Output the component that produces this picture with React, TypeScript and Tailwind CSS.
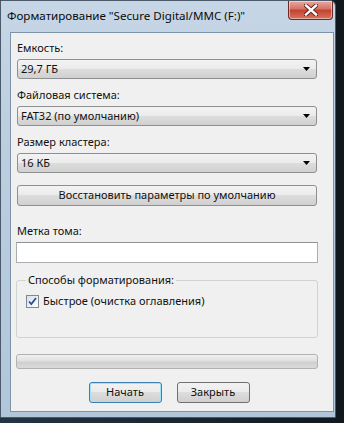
import React from 'react';

const Combo = ({ value }: { value: string }) => (
  <div className="flex h-[20px] items-center justify-between rounded-[3px] border border-[#8e8f8f] bg-[linear-gradient(#f3f3f3,#ebebeb_50%,#dddddd_50%,#d0d0d0)] pl-[3px] pr-[6px]">
    <span>{value}</span>
    <svg width="7" height="4" viewBox="0 0 7 4">
      <path d="M0 0h7L3.5 4z" fill="#000" />
    </svg>
  </div>
);

const Label = ({ children }: { children: React.ReactNode }) => (
  <div className="mb-[3px] h-[16px] leading-[16px]">{children}</div>
);

export default function App() {
  return (
    <div className="h-[423px] w-[344px] overflow-hidden bg-[linear-gradient(90deg,#243444,#10181f)] font-['Noto_Sans',sans-serif] text-[11px] text-[#111]">
      <div className="flex h-[418px] w-[336px] flex-col rounded-tr-[6px] border border-[#4a5a6a] bg-[linear-gradient(180deg,#c6d6e6,#bccfe1_30%,#b2c6da)]">
        {/* title bar */}
        <div className="flex h-[31px] items-start justify-between pl-[6px]">
          <div className="pt-[7px] text-[11.6px] leading-[16px] text-[#0b0b0b]">
            Форматирование "Secure Digital/MMC (F:)"
          </div>
          <div className="mr-[2px] flex h-[19px] w-[45px] items-center justify-center rounded-b-[4px] border border-t-0 border-[#6b2a26] bg-[linear-gradient(#e9a99f,#d27266_45%,#c2402f_50%,#d6745e)] shadow-[inset_0_0_0_1px_rgba(255,255,255,0.45)]">
            <svg width="14" height="12" viewBox="0 0 14 12">
              <path d="M2 1.5l10 9M12 1.5l-10 9" stroke="#5a1c16" strokeWidth="4.2" strokeLinecap="square" />
              <path d="M2 1.5l10 9M12 1.5l-10 9" stroke="#fff" strokeWidth="2.4" strokeLinecap="square" />
            </svg>
          </div>
        </div>
        {/* client area */}
        <div className="ml-[9px] mr-[1px] flex h-[380px] flex-col border border-[#7f93a8] bg-[#f0f0f0] pl-[6px] pr-[16px] pt-[7px]">
          <Label>Емкость:</Label>
          <Combo value="29,7 ГБ" />
          <div className="mt-[8px]">
            <Label>Файловая система:</Label>
            <Combo value="FAT32 (по умолчанию)" />
          </div>
          <div className="mt-[8px]">
            <Label>Размер кластера:</Label>
            <Combo value="16 КБ" />
          </div>
          <div className="mt-[12px] flex h-[21px] items-center justify-center rounded-[3px] border border-[#8e8f8f] bg-[linear-gradient(#f3f3f3,#ebebeb_50%,#dddddd_50%,#d0d0d0)]">
            Восстановить параметры по умолчанию
          </div>
          <div className="mt-[17px]">
            <Label>Метка тома:</Label>
            <div className="-mx-[1px] h-[21px] border border-[#abadb3] border-t-[#8f9499] bg-white" />
          </div>
          <fieldset className="-mx-[1px] mt-[9px] h-[66px] rounded-[3px] border border-[#cfd3d6] px-[9px] pt-[5px]">
            <legend className="px-[2px] leading-[16px]">Способы форматирования:</legend>
            <label className="flex items-center gap-[4px]">
              <span className="flex h-[13px] w-[13px] items-center justify-center border border-[#7a8a99] bg-[linear-gradient(135deg,#d9dfe6,#ffffff)]">
                <svg width="9" height="9" viewBox="0 0 9 9">
                  <path d="M1 4.5l2.3 2.5L8 1" fill="none" stroke="#2a4f9a" strokeWidth="1.8" />
                </svg>
              </span>
              <span className="leading-[16px]">Быстрое (очистка оглавления)</span>
            </label>
          </fieldset>
          <div className="-mx-[1px] mt-[16px] h-[15px] rounded-[3px] border border-[#b2b2b2] bg-[linear-gradient(#f0f0f0,#e0e0e0_45%,#cfcfcf_55%,#dadada)]" />
          <div className="mt-[13px] flex justify-center gap-[15px] pl-[4px]">
            <div className="flex h-[21px] w-[73px] items-center justify-center rounded-[3px] border border-[#3c7fb1] bg-[linear-gradient(#f2f2f2,#ebebeb_50%,#dddddd_50%,#cfcfcf)] shadow-[inset_0_0_0_1px_#9ee2fb]">
              Начать
            </div>
            <div className="flex h-[21px] w-[73px] items-center justify-center rounded-[3px] border border-[#707070] bg-[linear-gradient(#f2f2f2,#ebebeb_50%,#dddddd_50%,#cfcfcf)]">
              Закрыть
            </div>
          </div>
        </div>
      </div>
    </div>
  );
}
